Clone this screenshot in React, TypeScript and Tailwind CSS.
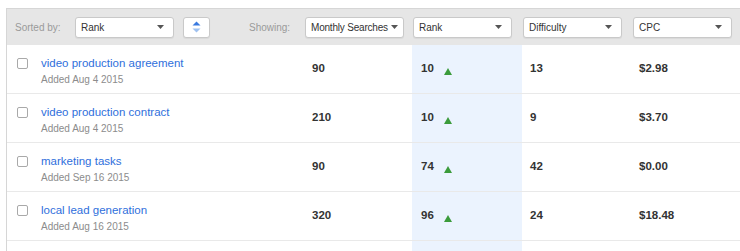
import React from "react";

const Caret = () => (
  <svg width="7" height="4" viewBox="0 0 7 4" className="shrink-0">
    <path d="M0 0 L7 0 L3.5 4 Z" fill="#555" />
  </svg>
);

const Select = ({ label, className = "", tight = false }: { label: string; className?: string; tight?: boolean }) => (
  <div
    className={`h-[21px] w-[99px] bg-white border border-[#c9c9c9] rounded-[3px] shadow-[0_1px_1px_rgba(0,0,0,0.06)] flex items-center pl-[5px] text-[10px] text-[#333] whitespace-nowrap ${
      tight ? "gap-[3px] pr-[4px] tracking-[-0.2px]" : "justify-between pr-[9px]"
    } ${className}`}
  >
    <span>{label}</span>
    <Caret />
  </div>
);

const rows = [
  { name: "video production agreement", date: "Added Aug 4 2015", ms: "90", rank: "10", diff: "13", cpc: "$2.98" },
  { name: "video production contract", date: "Added Aug 4 2015", ms: "210", rank: "10", diff: "9", cpc: "$3.70" },
  { name: "marketing tasks", date: "Added Sep 16 2015", ms: "90", rank: "74", diff: "42", cpc: "$0.00" },
  { name: "local lead generation", date: "Added Aug 16 2015", ms: "320", rank: "96", diff: "24", cpc: "$18.48" },
];

const cols = "grid grid-cols-[295px_110px_110px_110px_108px]";

export default function App() {
  return (
    <div className="w-[740px] h-[251px] overflow-hidden bg-white font-['Liberation_Sans',Arial,sans-serif]">
      <div className="mt-[8px] ml-[6px] w-[734px] border-l border-t border-[#d6d6d6]">
        {/* header */}
        <div className={`h-[36px] bg-[#e6e6e6] items-center ${cols}`}>
          <div className="flex items-center pl-[8px]">
            <span className="text-[10px] text-[#9a9a9a] w-[60px]">Sorted by:</span>
            <Select label="Rank" />
            <div className="ml-[9px] h-[21px] w-[27px] bg-white border border-[#c9c9c9] rounded-[3px] shadow-[0_1px_1px_rgba(0,0,0,0.06)] flex items-center justify-center">
              <svg width="9" height="12" viewBox="0 0 9 12">
                <path d="M0.5 4.5 L4.5 0.5 L8.5 4.5 Z" fill="#3a7ae0" />
                <path d="M0.5 7.5 L8.5 7.5 L4.5 11.5 Z" fill="#9fc1f0" />
              </svg>
            </div>
            <span className="ml-[39px] text-[10px] text-[#9a9a9a]">Showing:</span>
          </div>
          <div className="pl-[3px]">
            <Select label="Monthly Searches" tight />
          </div>
          <div className="pl-[1px]">
            <Select label="Rank" />
          </div>
          <div className="pl-[1px]">
            <Select label="Difficulty" />
          </div>
          <div className="pl-[1px]">
            <Select label="CPC" />
          </div>
        </div>
        {/* rows */}
        {rows.map((r, i) => (
          <div key={i} className={`h-[49px] border-b border-[#e9e9e9] ${cols}`}>
            <div className="flex items-start pt-[11px]">
              <div className="ml-[10px] mt-[2px] w-[11px] h-[11px] rounded-[2px] border border-[#a9a9a9] bg-white" />
              <div className="ml-[13px] flex flex-col">
                <span className="text-[11.5px] leading-[14px] text-[#2f6fdc]">{r.name}</span>
                <span className="mt-[3px] text-[10px] leading-[13px] text-[#8c8c8c]">{r.date}</span>
              </div>
            </div>
            <div className="flex items-center pl-[10px] text-[11.5px] font-bold text-[#333]">{r.ms}</div>
            <div className="flex items-center pl-[9px] bg-[#ebf3fe] text-[11.5px] font-bold text-[#333]">
              <span>{r.rank}</span>
              <svg width="8" height="7" viewBox="0 0 8 7" className="ml-[10px] mt-[5px]">
                <path d="M4 0 L8 7 L0 7 Z" fill="#3b9b3b" />
              </svg>
            </div>
            <div className="flex items-center pl-[8px] text-[11.5px] font-bold text-[#333]">{r.diff}</div>
            <div className="flex items-center pl-[7px] text-[11.5px] font-bold text-[#333]">{r.cpc}</div>
          </div>
        ))}
        {/* partially visible next row */}
        <div className={`h-[49px] ${cols}`}>
          <div />
          <div />
          <div className="bg-[#ebf3fe]" />
          <div />
          <div />
        </div>
      </div>
    </div>
  );
}
